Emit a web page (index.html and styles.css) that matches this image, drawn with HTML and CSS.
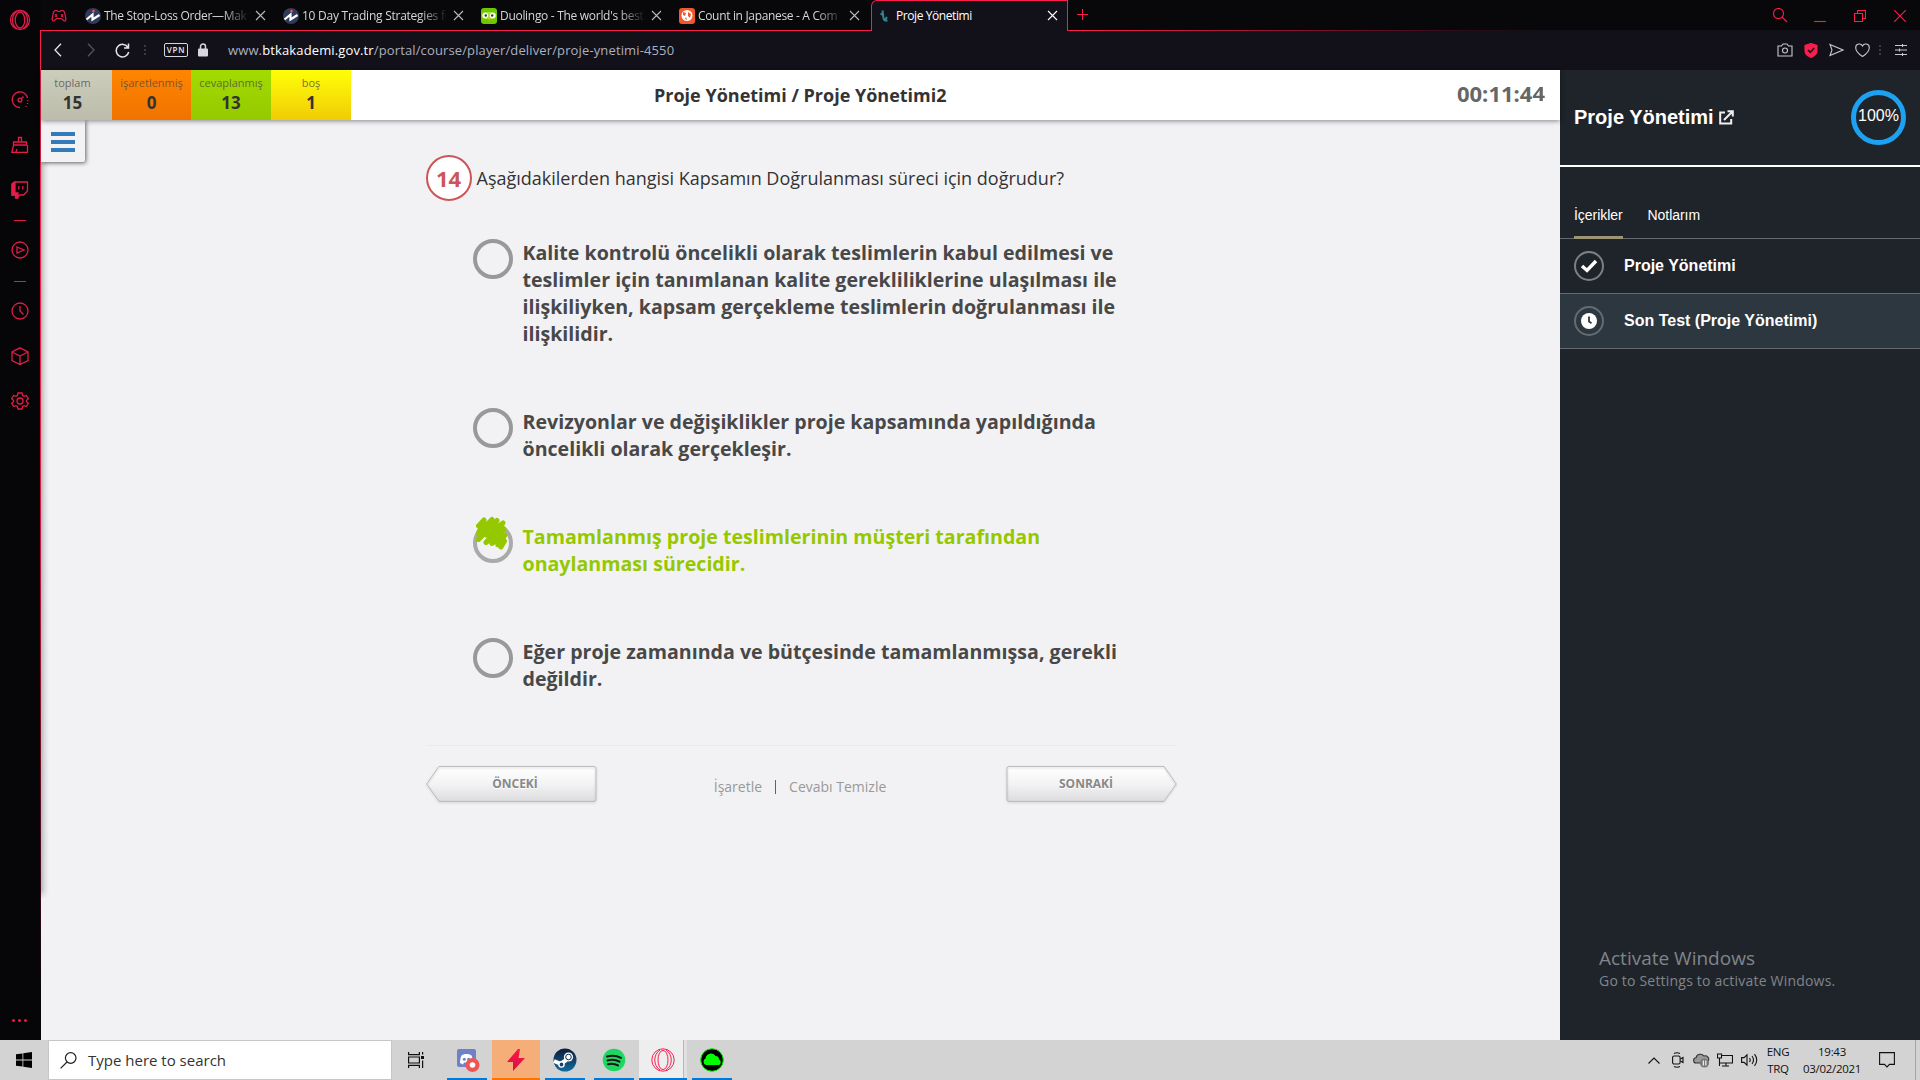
FILE: index.html
```html
<!DOCTYPE html>
<html lang="tr">
<head>
<meta charset="utf-8">
<title>Proje Yönetimi</title>
<link rel="stylesheet" href="styles.css">
</head>
<body>
<div class="desktop">
  <div class="browser">
    <nav class="rail">
      <svg class="ri ri-opera" width="22" height="22" viewBox="0 0 22 22"><circle cx="11" cy="11" r="9.5"/><ellipse cx="11" cy="11" rx="4.8" ry="8"/><path d="M8 2.2c-6 4-6 13.500 0 17.600M14 2.200c6 4 6 13.500 0 17.600"/></svg>
      <svg class="ri ri-speed" width="18" height="18" viewBox="0 0 18 18"><path d="M9 16.500A7.800 7.800 0 1 1 16.600 7"/><circle cx="9" cy="9" r="1.900"/><path d="M10.500 7.500l2-2M16.800 9v1M16.500 12v1M15 15v1"/></svg>
      <svg class="ri ri-broom" width="18" height="18" viewBox="0 0 18 18"><path d="M7.500 6V1.500h3V6M2.500 9V6h13v3zM2.500 9.500L.8 16.300h15.700V9M5 16l1-3"/></svg>
      <svg class="ri ri-twitch" width="18" height="18" viewBox="0 0 18 18"><path d="M3.500 1h13v9l-4 4H9l-3 2.500V14H1V3z"/><path class="solid" d="M1 3l3-2v11h3v5H4.500v-3H1z"/><path d="M7.800 5v3.500M11.800 5v3.500"/></svg>
      <span class="dash dash-a"></span>
      <svg class="ri ri-play" width="18" height="18" viewBox="0 0 18 18"><circle cx="9" cy="9" r="8"/><path d="M6 6l7 3-7 3z"/></svg>
      <span class="dash dash-b"></span>
      <svg class="ri ri-clock" width="18" height="18" viewBox="0 0 18 18"><circle cx="9" cy="9" r="8"/><path d="M9 4v5l3.500 3.500"/></svg>
      <svg class="ri ri-cube" width="18" height="18" viewBox="0 0 18 18"><path d="M9 .8l8 4.200v8.500L9 17.500l-8-4V5zM1 5l8 4 8-4M9 9v8.500"/></svg>
      <svg class="ri ri-gear" width="18" height="18" viewBox="0 0 18 18"><circle cx="9" cy="9" r="3"/><path d="M7 1h4l.6 2.500 1.500.9 2.300-.9 1.900 3.200L15.500 8.200v1.600l1.800 1.500-1.900 3.200-2.300-.9-1.500.9L11 17H7l-.6-2.500-1.500-.9-2.300.9-1.900-3.200 1.800-1.500V8.200L.7 6.700l1.900-3.200 2.300.9 1.500-.9z"/></svg>
      <span class="rail-more"><i></i><i></i><i></i></span>
    </nav>

    <div class="window">
      <header class="tabbar">
        <svg class="gamepad" width="16" height="14" viewBox="0 0 16 14"><path d="M4 1.500h2l1 1h2l1-1h2l1.500 1.500L15 10l-.8 2H13l-2.500-2.500h-5L3 12H1.800L1 10l1.500-7zM4 5.500l2 2M6 5.500l-2 2M10 5.500l2 2M12 5.500l-2 2"/></svg>
        <div class="tab">
          <svg class="fav" viewBox="0 0 16 16"><circle cx="8" cy="8" r="8" fill="#303a5c"/><path d="M1.500 11.500L7.500 6.500v5l7-4.500" fill="none" stroke="#fff" stroke-width="2.200"/><circle cx="8.500" cy="3" r="1.300" fill="#f0593e"/></svg>
          <span class="tab-title fade">The Stop-Loss Order—Mak</span>
          <svg class="x" viewBox="0 0 11 11"><path d="M1 1l9 9M10 1l-9 9"/></svg>
        </div>
        <div class="tab">
          <svg class="fav" viewBox="0 0 16 16"><circle cx="8" cy="8" r="8" fill="#303a5c"/><path d="M1.500 11.500L7.500 6.500v5l7-4.500" fill="none" stroke="#fff" stroke-width="2.200"/><circle cx="8.500" cy="3" r="1.300" fill="#f0593e"/></svg>
          <span class="tab-title fade t2">10 Day Trading Strategies fo</span>
          <svg class="x" viewBox="0 0 11 11"><path d="M1 1l9 9M10 1l-9 9"/></svg>
        </div>
        <div class="tab">
          <svg class="fav" viewBox="0 0 16 16"><rect width="16" height="16" rx="3" fill="#6cc800"/><rect x="1" y="4" width="14" height="7" rx="3.500" fill="#a5e53a"/><circle cx="4.300" cy="7.500" r="2.800" fill="#fff"/><circle cx="11.700" cy="7.500" r="2.800" fill="#fff"/><circle cx="4.800" cy="7.500" r="1.200" fill="#333"/><circle cx="11.200" cy="7.500" r="1.200" fill="#333"/><path d="M6.500 10.500h3L8 13z" fill="#f7a520"/></svg>
          <span class="tab-title fade t3">Duolingo - The world's best</span>
          <svg class="x" viewBox="0 0 11 11"><path d="M1 1l9 9M10 1l-9 9"/></svg>
        </div>
        <div class="tab">
          <svg class="fav" viewBox="0 0 16 16"><rect width="16" height="16" rx="3" fill="#f0582c"/><circle cx="8" cy="7.500" r="5.500" fill="#fff"/><path d="M4 4l3 1-1 3-2-1zM9 4l3 2-1 4-2-2zM7 9l1 3-2-1z" fill="#f0582c"/></svg>
          <span class="tab-title fade t4">Count in Japanese - A Com</span>
          <svg class="x" viewBox="0 0 11 11"><path d="M1 1l9 9M10 1l-9 9"/></svg>
        </div>
        <div class="tab active">
          <svg class="fav" viewBox="0 0 16 16"><path d="M5.500 2.500l1 7.500q.5 3 4 2.500M3.500 5.500l3 2M8 12l2-3" fill="none" stroke="#2f8796" stroke-width="2"/></svg>
          <span class="tab-title t5">Proje Yönetimi</span>
          <svg class="x" viewBox="0 0 11 11"><path d="M1 1l9 9M10 1l-9 9"/></svg>
        </div>
        <svg class="plus" width="11" height="11" viewBox="0 0 11 11"><path d="M5.500 0v11M0 5.500h11"/></svg>
        <div class="controls">
          <svg width="16" height="16" viewBox="0 0 16 16"><circle cx="6.500" cy="5.500" r="5"/><path d="M10 9l5 5"/></svg>
          <svg width="12" height="16" viewBox="0 0 12 16"><path d="M0 13.500h12"/></svg>
          <svg width="12" height="12" viewBox="0 0 12 12"><path d="M.5 3.500h8v8h-8zM3.500 3.500v-3h8v8h-3"/></svg>
          <svg width="12" height="12" viewBox="0 0 12 12"><path d="M0 0l12 12M12 0L0 12"/></svg>
        </div>
      </header>

      <div class="addressbar">
        <svg class="nav-i back" width="8" height="14" viewBox="0 0 8 14"><path d="M7 .8L1 7l6 6.200"/></svg>
        <svg class="nav-i fwd" width="8" height="14" viewBox="0 0 8 14"><path d="M1 .8L7 7l-6 6.200"/></svg>
        <svg class="nav-i reload" width="15" height="15" viewBox="0 0 15 15"><path d="M13 4.500A6.300 6.300 0 1 0 13.700 9M13.500.5v4.500H9"/></svg>
        <span class="dots"></span>
        <span class="vpn">VPN</span>
        <svg class="lock" width="10" height="14" viewBox="0 0 10 14"><path d="M2.500 6V3.500a2.500 2.500 0 0 1 5 0V6" fill="none" stroke="#d5d7dd" stroke-width="1.500"/><rect y="5.500" width="10" height="8" rx="1" fill="#d5d7dd"/></svg>
        <span class="url">www.<b>btkakademi.gov.tr</b>/portal/course/player/deliver/proje-ynetimi-4550</span>
        <div class="tools">
          <svg width="16" height="14" viewBox="0 0 16 14"><path d="M1 3h3.500L6 1h4l1.500 2H15v10H1z"/><circle cx="8" cy="7.500" r="2.500"/></svg>
          <svg width="14" height="15" viewBox="0 0 14 15"><path d="M7 .5l6 2V8c0 3-2.500 5-6 6.500C3.500 13 1 11 1 8V2.500z" fill="#fa1e4e" stroke="#fa1e4e"/><path d="M4 7l2.300 2.300L10.200 5" stroke="#121019" stroke-width="1.600"/></svg>
          <svg width="15" height="14" viewBox="0 0 15 14"><path d="M1 1.500L14 7 1 12.500 3 7z"/></svg>
          <svg width="15" height="14" viewBox="0 0 15 14"><path d="M7.500 13.500C3 10.500.7 8 .7 4.700.7 .5 6 -.2 7.500 3 9-.2 14.300.5 14.300 4.700c0 3.300-2.300 5.800-6.800 8.800z"/></svg>
          <span class="dots"></span>
          <svg width="12" height="12" viewBox="0 0 12 12"><path d="M0 1.500h12M0 6h12M0 10.500h12M7.500 0v3M4.500 4.500v3M7.500 9v3"/></svg>
        </div>
      </div>

      <div class="page">
        <main class="exam">
          <header class="exam-head">
            <div class="stat total"><span>toplam</span><b>15</b></div>
            <div class="stat marked"><span>işaretlenmiş</span><b>0</b></div>
            <div class="stat answered"><span>cevaplanmış</span><b>13</b></div>
            <div class="stat empty"><span>boş</span><b>1</b></div>
            <h1>Proje Yönetimi / Proje Yönetimi2</h1>
            <div class="timer">00:11:4<span class="cut">4</span></div>
          </header>
          <div class="exam-body">
            <div class="edge-shadow"></div>
            <button class="menu"><i></i><i></i><i></i></button>
            <section class="question">
              <div class="prompt"><span class="num">14</span><p>Aşağıdakilerden hangisi Kapsamın Doğrulanması süreci için doğrudur?</p></div>
              <ul class="options">
                <li><span class="radio"></span><p>Kalite kontrolü öncelikli olarak teslimlerin kabul edilmesi ve<br>teslimler için tanımlanan kalite gerekliliklerine ulaşılması ile<br>ilişkiliyken, kapsam gerçekleme teslimlerin doğrulanması ile<br>ilişkilidir.</p></li>
                <li><span class="radio"></span><p>Revizyonlar ve değişiklikler proje kapsamında yapıldığında<br>öncelikli olarak gerçekleşir.</p></li>
                <li class="chosen"><span class="radio"><svg class="scribble" width="34" height="34" viewBox="0 0 34 34"><path d="M4.500 10L10 4 4.500 17 18 3.500 4.500 23.500 23 4.500 12 19 29 7 12 26.500 30 13 18 27.500 31 19 24 29 30.500 25 27 31"/></svg></span><p>Tamamlanmış proje teslimlerinin müşteri tarafından<br>onaylanması sürecidir.</p></li>
                <li><span class="radio"></span><p>Eğer proje zamanında ve bütçesinde tamamlanmışsa, gerekli<br>değildir.</p></li>
              </ul>
              <footer class="pager">
                <button class="arrow prev"><svg viewBox="0 0 171 36"><path d="M13 .5H168a2 2 0 0 1 2 2v31a2 2 0 0 1-2 2H13L.7 18z"/></svg><span>ÖNCEKİ</span></button>
                <div class="links"><a>İşaretle</a><i></i><a>Cevabı Temizle</a></div>
                <button class="arrow next"><svg viewBox="0 0 171 36"><path d="M158 .5H3a2 2 0 0 0-2 2v31a2 2 0 0 0 2 2h155L170.300 18z"/></svg><span>SONRAKİ</span></button>
              </footer>
            </section>
          </div>
        </main>

        <aside class="panel">
          <div class="panel-head">
            <h2>Proje Yönetimi</h2>
            <svg class="ext" width="15" height="15" viewBox="0 0 15 15"><path d="M6 2.500H1.200v11h11V9M5 10l8-8M8.500 1.200H13.800V6.500"/></svg>
            <div class="ring">100%</div>
          </div>
          <div class="panel-tabs"><span class="on">İçerikler</span><span>Notlarım</span></div>
          <div class="item"><span class="state"><svg width="18" height="14" viewBox="0 0 18 14"><path d="M2 7l5 4.500L16 2" fill="none" stroke="#fff" stroke-width="3.400"/></svg></span>Proje Yönetimi</div>
          <div class="item current"><span class="state"><svg width="16" height="16" viewBox="0 0 16 16"><circle cx="8" cy="8" r="8" fill="#fff"/><path d="M8 3.500V8.500l2.500 1.700" fill="none" stroke="#2d3740" stroke-width="1.800"/></svg></span>Son Test (Proje Yönetimi)</div>
          <div class="activate"><strong>Activate Windows</strong><span>Go to Settings to activate Windows.</span></div>
        </aside>
      </div>
    </div>
  </div>

  <footer class="taskbar">
    <svg class="start" width="16" height="16" viewBox="0 0 16 16"><path d="M0 2.300l6.500-.9v6.200H0zM7.300 1.300L16 0v7.600H7.300zM0 8.400h6.500v6.200L0 13.700zM7.300 8.400H16V16l-8.700-1.300z"/></svg>
    <div class="search"><svg width="17" height="17" viewBox="0 0 17 17"><circle cx="10.700" cy="6" r="5.300"/><path d="M7 10L.6 16.400"/></svg><span>Type here to search</span></div>
    <svg class="taskview" width="17" height="16" viewBox="0 0 17 16"><path d="M.6 0v2.600h10.800V0M.6 5h10.800v6H.6zM.6 16v-2.600h10.800V16M14.600 0v2.500M14.600 8.500V16"/><path d="M13 4h3v3h-3z" fill="#111" stroke="none"/></svg>
    <div class="apps">
      <div class="app discord"><svg width="24" height="24" viewBox="0 0 24 24"><rect x="1" y="1" width="19" height="18" rx="2" fill="#6f82c8"/><path d="M4 15c0-4 1-7 2-8l3-1h3l3 1c1 1 2 4 2 8l-3 1.500-1-2H8l-1 2z" fill="#fff"/><circle cx="8.300" cy="11.300" r="1.500" fill="#6f82c8"/><circle cx="12.700" cy="11.300" r="1.500" fill="#6f82c8"/><circle cx="16.500" cy="17" r="7" fill="#ee5656"/><circle cx="16.500" cy="17" r="2.800" fill="#fff"/></svg></div>
      <div class="app hot"><svg width="24" height="24" viewBox="0 0 24 24"><defs><linearGradient id="bolt" x2="0" y2="1"><stop offset="0" stop-color="#ff1744"/><stop offset="1" stop-color="#d0104a"/></linearGradient></defs><path d="M14 1L3 14h6L9 23l12-13h-6.500L16 1z" fill="url(#bolt)"/></svg></div>
      <div class="app"><svg width="24" height="24" viewBox="0 0 24 24"><defs><linearGradient id="steam" x2="0" y2="1"><stop offset="0" stop-color="#101a38"/><stop offset="1" stop-color="#0f6d9f"/></linearGradient></defs><circle cx="12" cy="12" r="11.500" fill="url(#steam)"/><path d="M1 13l6.500 2.800L12 13l3-4" fill="none" stroke="#fff" stroke-width="4"/><circle cx="15.500" cy="9" r="4.600" fill="#fff"/><circle cx="15.500" cy="9" r="2.800" fill="#fff" stroke="#14284a"/><circle cx="8.500" cy="16.500" r="2.600" fill="#14456e" stroke="#fff" stroke-width="1.400"/></svg></div>
      <div class="app"><svg width="24" height="24" viewBox="0 0 24 24"><circle cx="12" cy="12" r="11.300" fill="#1ed760"/><path d="M5 8.500q7.500-2 14 1.300M5.500 12.500q6.500-1.800 12 1.200M6 16.200q5.500-1.300 10 1.200" fill="none" stroke="#191414" stroke-width="2" stroke-linecap="round"/></svg></div>
      <div class="app open"><svg width="24" height="24" viewBox="0 0 24 24" fill="none" stroke="#fa1e4e" stroke-width="1"><circle cx="12" cy="12" r="11.200"/><ellipse cx="12" cy="12" rx="5" ry="9.600"/><path d="M9 2C2 6.500 2 17.500 9 22M15 2c7 4.500 7 15.500 0 20"/></svg></div>
      <div class="app"><svg width="24" height="24" viewBox="0 0 24 24"><circle cx="12" cy="12" r="11.300" fill="#000" stroke="#0f0" stroke-width="1"/><path d="M6 17a3.500 3.500 0 0 1-.5-6.500 5.500 5.500 0 0 1 10-2.500 3.500 3.500 0 0 1 3.500 3.500 3 3 0 0 1 0 5.500z" fill="#0f0"/></svg></div>
    </div>
    <div class="tray">
      <svg class="t-chev" width="12" height="7" viewBox="0 0 12 7"><path d="M.5 6.500L6 1l5.500 5.500"/></svg>
      <svg class="t-meet" width="12" height="16" viewBox="0 0 12 16"><rect x=".6" y="4" width="7.500" height="8" rx="1.500"/><path d="M8.500 7l2.500-1.500v5L8.500 9M2 1.500Q5 0 8 1.500M2 14.500q3 1.500 6 0"/></svg>
      <svg class="t-cloud" width="17" height="16" viewBox="0 0 17 16"><path d="M3.500 11a2.600 2.600 0 0 1-.5-5.200A4.500 4.500 0 0 1 11 4a3.500 3.500 0 0 1 4.500 4.500L8 11z" fill="#999" stroke="#333"/><circle cx="11.500" cy="11" r="4.600" fill="#777" stroke="none"/><path d="M10.300 8.500v5M12.800 8.500v5" stroke="#fff"/></svg>
      <svg class="t-net" width="16" height="14" viewBox="0 0 16 14"><path d="M5 2.500h10.500v7.500H3M9 10v3M5 13h7M.5 1h4v4h-4zM2.500 5v8"/></svg>
      <svg class="t-vol" width="17" height="14" viewBox="0 0 17 14"><path d="M.6 4.600h2.500L6 1.800v10.400L3.100 9.400H.6zM8.500 5q1.500 2 0 4M11 3q3 4 0 8M13.500 1.200q4.500 5.800 0 11.600"/></svg>
      <div class="lang"><span>ENG</span><span>TRQ</span></div>
      <div class="time"><span>19:43</span><span>03/02/2021</span></div>
      <svg class="t-note" width="16" height="16" viewBox="0 0 16 16"><path d="M.6.600h14.800v11.800H10.500L8 15l-2.500-2.600H.6z"/></svg>
      <span class="peek"></span>
    </div>
  </footer>
</div>
</body>
</html>
```
FILE: styles.css
```css
* { box-sizing: border-box; }
body { margin: 0; font-family: "Open Sans", "Noto Sans", sans-serif; }
h1, h2, p, ul { margin: 0; padding: 0; }
button { border: 0; padding: 0; background: none; font: inherit; }
svg { display: block; flex: none; }
.desktop { width: 1920px; height: 1080px; display: flex; flex-direction: column; overflow: hidden; }
.browser { display: flex; height: 1040px; background: #060608; }

/* browser side rail */
.rail { width: 41px; position: relative; display: flex; flex-direction: column; align-items: center; padding-right: 2px; }
.rail::after { content: ""; position: absolute; right: 0; top: 30px; bottom: 0; width: 1px; background: linear-gradient(#fa1e4e 0, #fa1e4e 250px, #e01b47 450px, #4a0c1e 820px, #060608 960px); }
.ri { fill: none; stroke: #e31c49; stroke-width: 1.300; }
.ri .solid { fill: #e31c49; }
.ri-opera { margin-top: 9px; margin-left: 1px; }
.ri-speed { margin-top: 60px; }
.ri-broom { margin-top: 27px; }
.ri-twitch { margin-top: 27px; }
.dash { width: 12px; height: 1px; background: #e31c49; }
.dash-a { margin-top: 21px; }
.ri-play { margin-top: 20px; }
.dash-b { margin-top: 22px; }
.ri-clock { margin-top: 20px; }
.ri-cube { margin-top: 27px; }
.ri-gear { margin-top: 27px; }
.rail-more { margin: auto 0 18px; display: flex; gap: 3px; }
.rail-more i { width: 3px; height: 3px; border-radius: 50%; background: #e31c49; }

/* tabs */
.window { width: 1879px; display: flex; flex-direction: column; }
.tabbar { height: 31px; display: flex; align-items: center; padding-left: 10px; background: linear-gradient(90deg, #fa1e4e 0, #fa1e4e 1040px, #2a0b16 1430px, #121019 1500px) 0 100% / 100% 1px no-repeat, #08080a; font-size: 12px; color: #d6d6da; }
.gamepad { fill: none; stroke: #e31c49; stroke-width: 1.200; margin-right: 10px; }
.tab { width: 198px; height: 31px; display: flex; align-items: center; padding-left: 8px; }
.fav { width: 16px; height: 16px; margin-right: 3px; }
.tab-title { width: 144px; white-space: nowrap; letter-spacing: -.33px; line-height: 20px; }
.t2 { letter-spacing: -.25px; }
.t3 { letter-spacing: -.3px; }
.fade { -webkit-mask-image: linear-gradient(90deg, #000 118px, transparent 146px); mask-image: linear-gradient(90deg, #000 118px, transparent 146px); }
.x { width: 11px; height: 11px; margin-left: 7px; fill: none; stroke: #b9b9be; stroke-width: 1.100; }
.tab.active { width: 197px; margin-left: 1.500px; padding-left: 5.500px; padding-bottom: 1px; background: #121019; border: 1px solid #fa1e4e; border-bottom: 0; border-radius: 6px 0 0 0; color: #fff; }
.t5 { letter-spacing: -.42px; }
.active .x { stroke: #fff; margin-left: 7px; }
.plus { margin-left: 9px; margin-bottom: 2px; fill: none; stroke: #fa1e4e; }
.controls { margin-left: auto; padding-right: 14px; display: flex; align-items: center; gap: 28px; }
.controls svg { fill: none; stroke: #fa1e4e; stroke-width: 1.100; }
.controls svg:first-child { margin-right: -2px; }

/* address bar */
.addressbar { height: 39px; padding-bottom: 1px; background: #121019; display: flex; align-items: center; }
.nav-i { fill: none; stroke: #e6e6ea; stroke-width: 1.300; }
.back { margin-left: 13px; }
.fwd { margin-left: 25px; stroke: #55555c; }
.reload { margin-left: 20px; stroke-width: 1.500; }
.dots { width: 2px; height: 10px; background: repeating-linear-gradient(#3a3a42 0 2px, transparent 2px 4px); }
.addressbar > .dots { margin-left: 14px; }
.vpn { margin-left: 18px; width: 24px; height: 14px; border: 1px solid #d5d7dd; border-radius: 2px; color: #e6e6ea; font: 600 8px/12px "Open Sans", sans-serif; letter-spacing: .8px; text-align: center; }
.lock { margin-left: 10px; }
.url { margin-left: 20px; font-size: 13px; letter-spacing: .13px; color: #a9b0bf; white-space: nowrap; }
.url b { font-weight: 400; color: #fff; }
.tools { margin-left: auto; padding-right: 13px; display: flex; align-items: center; gap: 11px; }
.tools svg { fill: none; stroke: #c6c8ce; stroke-width: 1.100; }
.tools .dots { margin-left: -2px; margin-right: 3px; }

/* exam page */
.page { display: flex; height: 970px; }
.exam { width: 1519px; background: #f2f2f4; display: flex; flex-direction: column; }
.exam-head { height: 50px; background: #fff; display: flex; position: relative; z-index: 2; box-shadow: 0 1px 5px rgba(0,0,0,.45); }
.stat { display: flex; flex-direction: column; align-items: center; width: 80px; color: #333; }
.stat span { margin-top: 4px; font-size: 11px; line-height: 18px; color: rgba(70,70,70,.75); white-space: nowrap; }
.stat b { font-size: 17px; line-height: 22px; font-weight: 700; }
.total { width: 71px; padding-right: 8px; background: linear-gradient(#cccdbb, #bcbcac); }
.marked { width: 79px; background: linear-gradient(#ff8500, #f07300); }
.answered { background: linear-gradient(#a2db00, #95c900); }
.empty { background: linear-gradient(#ffff08, #f0cc05); }
.exam-head h1 { margin-left: 303px; font-size: 18px; line-height: 50px; font-weight: 700; color: #333; white-space: nowrap; }
.timer { margin-left: auto; padding-right: 15px; font-size: 22px; line-height: 47px; font-weight: 700; color: #666; }
.cut { display: inline-block; transform: scaleY(.86); }
.exam-body { flex: 1; position: relative; display: flex; justify-content: center; }
.edge-shadow { position: absolute; left: 0; top: 0; width: 10px; height: 779px; background: linear-gradient(90deg, rgba(0,0,0,.24), rgba(0,0,0,.08) 4px, transparent 8px); -webkit-mask-image: linear-gradient(#000 770px, transparent); mask-image: linear-gradient(#000 770px, transparent); }
.menu { position: absolute; left: 0; top: 0; width: 44px; height: 42px; padding-top: 2px; background: #f2f2f4; box-shadow: 1px 1px 4px rgba(0,0,0,.6); display: flex; flex-direction: column; align-items: center; justify-content: center; gap: 4px; border-radius: 0 0 2px 0; }
.menu i { width: 24px; height: 4px; background: #337ab7; }
.question { width: 751px; margin-left: 1px; padding-top: 35px; }
.prompt { display: flex; align-items: center; }
.num { width: 46px; height: 46px; border: 2px solid #cd5557; border-radius: 50%; background: #fff; color: #cd5557; font-size: 22px; line-height: 42px; font-weight: 700; text-align: center; }
.prompt p { margin-left: 5px; font-size: 18px; font-weight: 400; color: #333; white-space: nowrap; }
.options { list-style: none; padding: 39px 0 0 47px; }
.options li { display: flex; padding-bottom: 61px; }
.radio { flex: none; width: 40px; height: 40px; margin-top: -1px; margin-bottom: -1px; border: 4px solid #999; border-radius: 50%; position: relative; }
.options p { margin: -1px 0 1px 10px; font-size: 19.620px; line-height: 27px; font-weight: 700; color: #484848; white-space: nowrap; }
.options .chosen p { color: #96c800; }
.chosen .radio { border-color: #aaa; }
.scribble { position: absolute; left: -3px; top: -11px; fill: none; stroke: #96c800; stroke-width: 5; stroke-linecap: round; stroke-linejoin: round; }
.pager { margin-top: -9px; border-top: 1px solid #eaeaec; padding-top: 20px; display: flex; justify-content: space-between; position: relative; }
.arrow { width: 171px; height: 36px; position: relative; color: #888; font-size: 12px; font-weight: 700; }
.arrow svg { position: absolute; left: 0; top: 0; width: 171px; height: 36px; overflow: visible; fill: none; stroke: #bbb; filter: drop-shadow(0 1px 1px rgba(0,0,0,.18)); }
.arrow::before { content: ""; position: absolute; inset: 1px; background: linear-gradient(#fff, #f3f3f4 50%, #dddddf); }
.prev::before { clip-path: polygon(12px 0, 100% 0, 100% 100%, 12px 100%, 0 50%); }
.next::before { clip-path: polygon(0 0, 157px 0, 100% 50%, 157px 100%, 0 100%); }
.arrow span { position: relative; line-height: 34px; text-shadow: 0 1px 0 #fff; }
.prev span { left: 4px; }
.next span { left: -5px; }
.links { display: flex; align-items: center; font-size: 14px; color: #999; padding-top: 5px; margin-left: -2px; }
.links i { width: 1px; height: 14px; margin: 0 13px; background: #5c6470; }

/* course panel */
.panel { width: 360px; background: #1f242b; color: #fff; font-family: "Liberation Sans", Arial, sans-serif; display: flex; flex-direction: column; }
.panel-head { height: 97px; padding: 0 14px 0 14px; border-bottom: 2px solid #fff; display: flex; align-items: center; }
.panel-head h2 { font-size: 20px; line-height: 24px; margin-bottom: 2px; }
.ext { margin-left: 5px; margin-bottom: 1px; fill: none; stroke: #f0f0f0; stroke-width: 2; }
.ring { margin-left: auto; width: 55px; height: 55px; border: 5px solid #1da1f2; border-radius: 50%; font-size: 16px; line-height: 42px; display: flex; justify-content: center; }
.panel-tabs { height: 72px; padding-left: 14px; border-bottom: 1px solid #646a70; display: flex; gap: 25px; align-items: flex-end; font-size: 14px; letter-spacing: -.05px; line-height: 16px; }
.panel-tabs span { height: 32px; margin-bottom: -1px; border-bottom: 3px solid transparent; }
.panel-tabs .on { border-color: #9c9474; }
.item { height: 55px; border-bottom: 1px solid #646a70; padding-left: 14px; display: flex; align-items: center; font-size: 16px; font-weight: 700; }
.state { width: 30px; height: 30px; border: 2px solid #7c8185; border-radius: 50%; margin-right: 20px; display: flex; align-items: center; justify-content: center; }
.current { background: #2d3740; }
.current .state { border-color: #646b72; }
.activate { margin: auto 0 50px 39px; display: flex; flex-direction: column; font-family: "Open Sans", sans-serif; color: #81858a; }
.activate strong { font-size: 19px; line-height: 26px; font-weight: 400; }
.activate span { font-size: 14px; line-height: 19px; letter-spacing: .2px; }

/* windows taskbar */
.taskbar { height: 40px; background: #d3d3d3; display: flex; align-items: center; color: #111; }
.start { margin-left: 16px; fill: #000; }
.search { margin-left: 16px; width: 344px; height: 40px; border: 1px solid #c6c6c6; background: #fff; display: flex; align-items: center; padding-left: 11px; font-size: 15px; color: #333; }
.search svg { fill: none; stroke: #222; stroke-width: 1.200; margin-right: 11px; }
.taskview { margin-left: 16px; fill: none; stroke: #111; stroke-width: 1.200; }
.apps { margin-left: 18px; display: flex; gap: 1px; }
.app { width: 48px; height: 40px; display: flex; align-items: center; justify-content: center; background: linear-gradient(#0078d7, #0078d7) 50% 100% / 40px 2px no-repeat; }
.discord { padding-left: 2px; }
.hot { background: linear-gradient(#ff7300, #ff7300) 50% 100% / 100% 2px no-repeat, #f6ae78; }
.open { background: linear-gradient(#0078d7, #0078d7) 0 100% / 100% 2px no-repeat, linear-gradient(90deg, #eee 44px, #b8b8b8 44px 45px, #e0e0e0 45px); }
.tray { margin-left: auto; display: flex; align-items: center; height: 40px; }
.tray svg { fill: none; stroke: #111; stroke-width: 1.100; }
.t-meet { margin-left: 12px; }
.t-cloud { margin-left: 9px; }
.t-net { margin-left: 7px; }
.t-vol { margin-left: 8px; }
.lang, .time { display: flex; flex-direction: column; align-items: center; font-size: 11.500px; line-height: 17px; letter-spacing: -.3px; }
.lang { width: 24px; margin-left: 8px; }
.time { width: 60px; margin-left: 12px; }
.t-note { margin-left: 17px; }
.peek { width: 1px; height: 40px; background: #a4a4a4; margin: 0 4px 0 20px; }
```
